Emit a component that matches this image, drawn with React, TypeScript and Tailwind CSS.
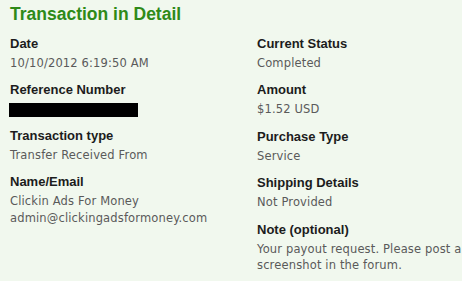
import React from 'react';

type Item = { label: string; lines?: string[]; redacted?: boolean };

const left: Item[] = [
  { label: 'Date', lines: ['10/10/2012 6:19:50 AM'] },
  { label: 'Reference Number', redacted: true },
  { label: 'Transaction type', lines: ['Transfer Received From'] },
  { label: 'Name/Email', lines: ['Clickin Ads For Money', 'admin@clickingadsformoney.com'] },
];

const right: Item[] = [
  { label: 'Current Status', lines: ['Completed'] },
  { label: 'Amount', lines: ['$1.52 USD'] },
  { label: 'Purchase Type', lines: ['Service'] },
  { label: 'Shipping Details', lines: ['Not Provided'] },
  { label: 'Note (optional)', lines: ['Your payout request. Please post a', 'screenshot in the forum.'] },
];

function Field({ item }: { item: Item }) {
  return (
    <div className="flex flex-col">
      <div className="font-['Liberation_Sans',Arial,sans-serif] font-bold text-[13px] leading-[18px] text-[#1c1c1c]">
        {item.label}
      </div>
      {item.redacted ? (
        <div className="mt-[3.5px] ml-[-1px] w-[129px] h-[14px] bg-black" />
      ) : (
        <div className="mt-[2px] font-['DejaVu_Sans',Verdana,sans-serif] text-[11.5px] tracking-[0.15px] leading-[16.5px] text-[#5a5a5a] whitespace-nowrap">
          {item.lines?.map((l) => (
            <div key={l}>{l}</div>
          ))}
        </div>
      )}
    </div>
  );
}

export default function App() {
  return (
    <div className="w-[462px] h-[281px] overflow-hidden bg-[#f1f8ee] pl-[10px] pt-[3px]">
      <h1 className="font-['Liberation_Sans',Arial,sans-serif] font-bold text-[17.5px] leading-[22px] text-[#2e8a18]">
        Transaction in Detail
      </h1>
      <div className="mt-[9.5px] grid grid-cols-[247px_1fr]">
        <div className="flex flex-col gap-[10px]">
          {left.map((it) => (
            <Field key={it.label} item={it} />
          ))}
        </div>
        <div className="flex flex-col gap-[10px]">
          {right.map((it) => (
            <Field key={it.label} item={it} />
          ))}
        </div>
      </div>
    </div>
  );
}
